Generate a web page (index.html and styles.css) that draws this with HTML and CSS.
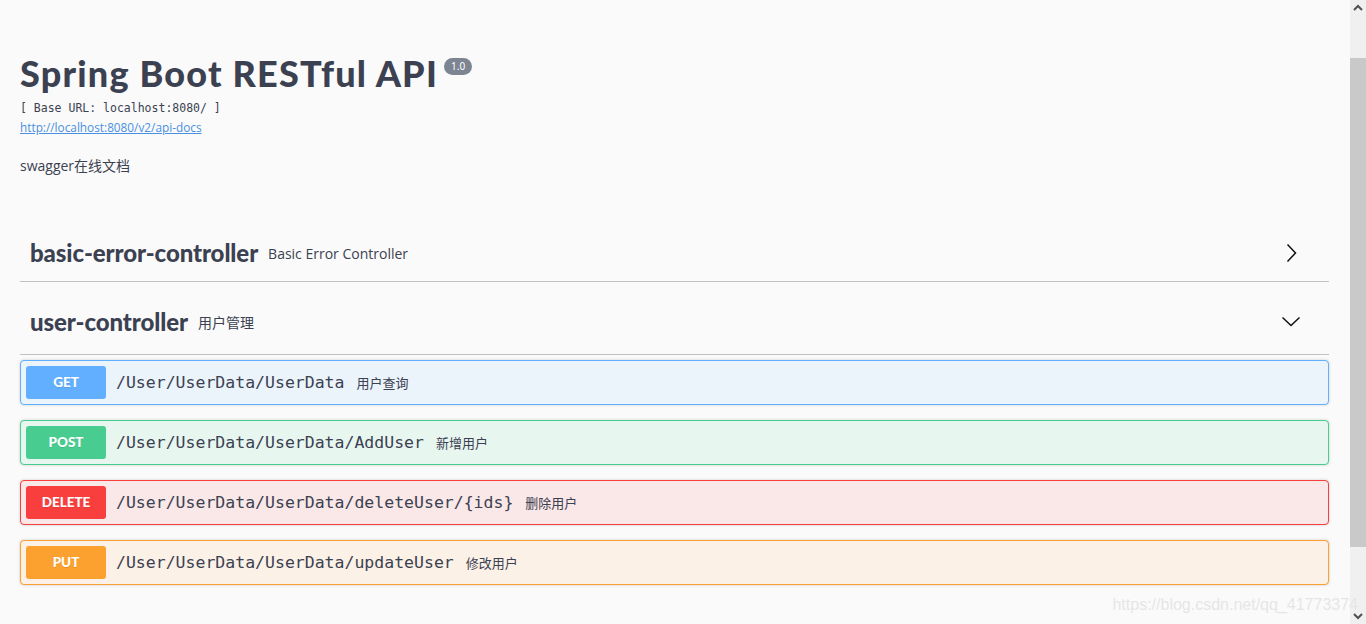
FILE: index.html
```html
<!DOCTYPE html>
<html lang="zh-CN">
<head>
<meta charset="utf-8">
<title>Swagger UI</title>
<link rel="stylesheet" href="styles.css">
</head>
<body>
<div class="screen">
  <main class="page">
    <section class="info">
      <h2 class="title">Spring Boot RESTful API<span class="version">1.0</span></h2>
      <div class="base-url">[ Base URL: localhost:8080/ ]</div>
      <a class="doc-link" href="#">http://localhost:8080/v2/api-docs</a>
      <p class="desc">swagger在线文档</p>
    </section>

    <section class="tags">
      <div class="tag tag-closed">
        <h4 class="tag-name">basic-error-controller</h4>
        <span class="tag-desc">Basic Error Controller</span>
        <svg class="tag-arrow" viewBox="0 0 20 20" width="20" height="20"><path d="M6.5 1.5 L14.5 10 L6.5 18.5" fill="none" stroke="#111" stroke-width="1.5"/></svg>
      </div>
      <div class="tag tag-open">
        <h4 class="tag-name">user-controller</h4>
        <span class="tag-desc">用户管理</span>
        <svg class="tag-arrow" viewBox="0 0 20 20" width="20" height="20"><path d="M1.5 5.5 L10 13.5 L18.5 5.5" fill="none" stroke="#111" stroke-width="1.5"/></svg>
      </div>

      <div class="ops">
        <div class="op op-get"><span class="method">GET</span><span class="path">/User/UserData/UserData</span><span class="summary">用户查询</span></div>
        <div class="op op-post"><span class="method">POST</span><span class="path">/User/UserData/UserData/AddUser</span><span class="summary">新增用户</span></div>
        <div class="op op-delete"><span class="method">DELETE</span><span class="path">/User/UserData/UserData/deleteUser/{ids}</span><span class="summary">删除用户</span></div>
        <div class="op op-put"><span class="method">PUT</span><span class="path">/User/UserData/UserData/updateUser</span><span class="summary">修改用户</span></div>
      </div>
    </section>
  </main>

  <div class="scrollbar">
    <div class="sb-btn"><svg viewBox="0 0 16 17" width="16" height="17"><path d="M4 10 L8 6 L12 10" fill="none" stroke="#505050" stroke-width="2"/></svg></div>
    <div class="sb-track"><div class="sb-thumb"></div></div>
    <div class="sb-btn"><svg viewBox="0 0 16 17" width="16" height="17"><path d="M4 7 L8 11 L12 7" fill="none" stroke="#505050" stroke-width="2"/></svg></div>
  </div>

  <div class="watermark">https://blog.csdn.net/qq_41773374</div>
</div>
</body>
</html>
```

FILE: styles.css
```css
html, body {
  margin: 0;
  padding: 0;
  height: 100%;
  overflow: hidden;
  background: #fafafa;
}

.screen {
  position: relative;
  display: flex;
  height: 624px;
  width: 1366px;
}

.page {
  flex: 1;
  padding: 0 21px 0 20px;
  color: #3b4151;
}

/* ---------- info ---------- */
.info {
  padding-top: 53px;
}

.title {
  margin: 0;
  display: flex;
  align-items: flex-start;
  font-family: Lato, "Noto Sans", sans-serif;
  font-weight: 900;
  font-size: 36px;
  line-height: 40px;
  letter-spacing: 1.2px;
  color: #3b4151;
}

.version {
  margin: 5px 0 0 6px;
  padding: 0 7px;
  height: 17px;
  line-height: 17px;
  border-radius: 57px;
  background: #7d8492;
  color: #fff;
  font-family: "Noto Sans", sans-serif;
  font-size: 10px;
  font-weight: 400;
  letter-spacing: 0;
}

.base-url {
  margin-top: 7px;
  font-family: "DejaVu Sans Mono", monospace;
  font-size: 11.5px;
  line-height: 16px;
  color: #3b4151;
}

.doc-link {
  display: inline-block;
  margin-top: 3px;
  font-family: "Open Sans", sans-serif;
  font-size: 11.8px;
  line-height: 16px;
  color: #4990e2;
  text-decoration: underline;
}

.desc {
  margin: 20px 0 0;
  font-family: "Open Sans", "Noto Sans CJK SC", sans-serif;
  font-size: 14px;
  line-height: 20px;
  color: #3b4151;
}

/* ---------- tags ---------- */
.tags {
  margin-top: 38px;
}

.tag {
  display: flex;
  align-items: center;
  box-sizing: border-box;
  padding: 0 28px 0 10px;
  border-bottom: 1px solid rgba(59, 65, 81, 0.3);
  margin-bottom: 5px;
}

.tag-closed {
  height: 68px;
  padding-top: 11px;
}

.tag-open {
  height: 68px;
  padding-top: 3px;
}

.tag-name {
  margin: 0;
  font-family: Lato, "Noto Sans", sans-serif;
  font-weight: 900;
  font-size: 24px;
  line-height: 30px;
  letter-spacing: -0.1px;
  color: #3b4151;
}

.tag-desc {
  flex: 1;
  padding: 0 10px;
  font-family: "Open Sans", "Noto Sans CJK SC", sans-serif;
  font-size: 14px;
  color: #3b4151;
}

.tag-arrow {
  display: block;
}

/* ---------- operations ---------- */
.op {
  display: flex;
  align-items: center;
  padding: 5px;
  margin-bottom: 15px;
  border: 1px solid;
  border-radius: 4px;
  box-shadow: 0 0 3px rgba(0, 0, 0, 0.19);
}

.method {
  box-sizing: border-box;
  width: 80px;
  height: 33px;
  line-height: 33px;
  border-radius: 3px;
  text-align: center;
  color: #fff;
  font-family: Lato, "Noto Sans", sans-serif;
  font-weight: 900;
  font-size: 13.5px;
  text-shadow: 0 1px 0 rgba(0, 0, 0, 0.1);
}

.path {
  padding: 0 10px;
  font-family: "DejaVu Sans Mono", monospace;
  font-size: 16.5px;
  color: #3b4151;
}

.summary {
  margin-left: 2px;
  font-family: "Open Sans", "Noto Sans CJK SC", sans-serif;
  font-size: 13px;
  color: #3b4151;
}

.op-get { background: #ebf3fb; border-color: #61affe; }
.op-get .method { background: #61affe; }

.op-post { background: #e8f6f0; border-color: #49cc90; }
.op-post .method { background: #49cc90; }

.op-delete { background: #fae7e7; border-color: #f93e3e; }
.op-delete .method { background: #f93e3e; }

.op-put { background: #fbf1e6; border-color: #fca130; }
.op-put .method { background: #fca130; }

/* ---------- fake window scrollbar ---------- */
.scrollbar {
  width: 16px;
  display: flex;
  flex-direction: column;
  background: #f0f0f0;
}

.sb-btn {
  height: 17px;
}

.sb-btn svg {
  display: block;
}

.sb-track {
  flex: 1;
  padding-top: 41px;
}

.sb-thumb {
  height: 489px;
  background: #c9c9c9;
}

/* ---------- CSDN watermark ---------- */
.watermark {
  position: absolute;
  right: 8px;
  top: 596px;
  font-family: "Liberation Sans", Arial, sans-serif;
  font-size: 16px;
  color: rgba(225, 225, 225, 0.85);
  text-shadow: 0 0 1px rgba(255, 255, 255, 0.6);
  white-space: nowrap;
}
```
